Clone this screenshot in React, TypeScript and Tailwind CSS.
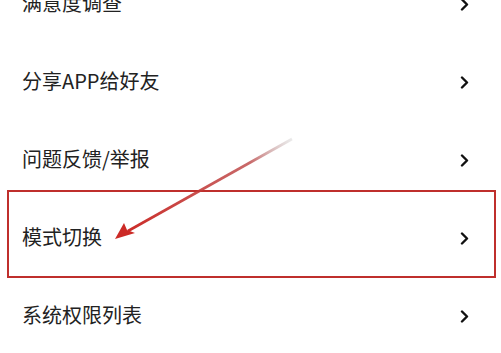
// 设置菜单列表 + 红色标注
const ITEMS = ['满意度调查', '分享APP给好友', '问题反馈/举报', '模式切换', '系统权限列表'];

function Chevron() {
  return (
    <svg width="9" height="13" viewBox="0 0 9 13" className="shrink-0">
      <path d="M2 1.5 L7 6.5 L2 11.5" fill="none" stroke="#111" strokeWidth="2.4" strokeLinecap="round" strokeLinejoin="round" />
    </svg>
  );
}

export default function App() {
  return (
    <div
      className="relative w-[501px] h-[353px] overflow-hidden bg-white"
      style={{ fontFamily: '"Noto Sans CJK SC", "Noto Sans", sans-serif' }}
    >
      <ul className="mt-[-35px]">
        {ITEMS.map(label => (
          <li key={label} className="h-[78px] flex items-center justify-between pl-[22px] pr-[32px]">
            <span className="text-[20px] leading-none text-[#222] mt-[-3px]">{label}</span>
            <Chevron />
          </li>
        ))}
      </ul>

      {/* 标注框 */}
      <div className="absolute left-[7px] top-[190px] w-[489px] h-[88px] border-[2.5px] border-[#bf2f2c]" />

      {/* 箭头 */}
      <svg className="absolute inset-0" width="501" height="353" viewBox="0 0 501 353">
        <defs>
          <linearGradient id="fade" x1="292" y1="139" x2="125" y2="233" gradientUnits="userSpaceOnUse">
            <stop offset="0" stopColor="#bbb" stopOpacity="0.3" />
            <stop offset="0.25" stopColor="#b44" stopOpacity="0.8" />
            <stop offset="1" stopColor="#cc2a26" />
          </linearGradient>
        </defs>
        <path d="M292 139 L128 231" stroke="url(#fade)" strokeWidth="2.6" fill="none" />
        <path d="M115 239 L124 223 L127 230 L135 233 Z" fill="#cc2a26" />
      </svg>
    </div>
  );
}
